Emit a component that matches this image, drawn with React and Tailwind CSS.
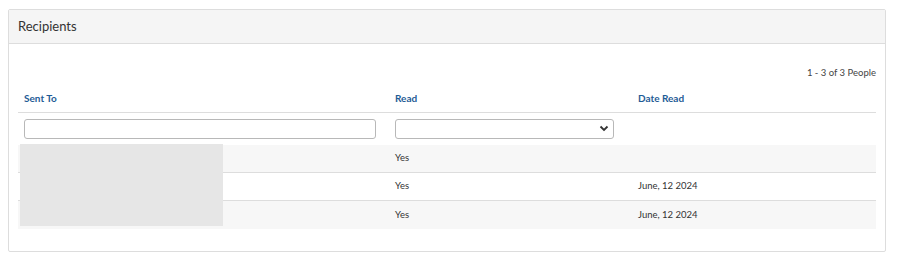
const rows = [
  { read: "Yes", date: "" },
  { read: "Yes", date: "June, 12 2024" },
  { read: "Yes", date: "June, 12 2024" },
];

export default function App() {
  return (
    <div className="bg-white w-[902px] h-[262px] pt-[9px] pl-[8px] font-['Lato','Open_Sans',sans-serif] text-[#333]">
      <div className="w-[878px] h-[243px] border border-[#dddddd] rounded-[2px]">
        <div className="h-[34px] bg-[#f5f5f5] border-b border-[#dddddd] px-[9px] flex items-center text-[13px] text-[#333]">
          Recipients
        </div>
        <div className="pl-[9px] pr-[8px]">
          <div className="h-[36px] pt-[22px] pr-[1px] text-right text-[9.5px] leading-[14px] text-[#444]">
            1 - 3 of 3 People
          </div>
          <div className="relative">
            <table className="w-[858px] table-fixed border-collapse text-[9.5px]">
              <colgroup>
                <col className="w-[371px]" />
                <col className="w-[243px]" />
                <col className="w-[244px]" />
              </colgroup>
              <thead>
                <tr className="border-b border-[#dddddd]">
                  <th className="h-[32px] px-[6px] pt-[6px] text-left align-middle text-[10px] font-bold text-[#1f5c96]">Sent To</th>
                  <th className="h-[32px] px-[6px] pt-[6px] text-left align-middle text-[10px] font-bold text-[#1f5c96]">Read</th>
                  <th className="h-[32px] px-[6px] pt-[6px] text-left align-middle text-[10px] font-bold text-[#1f5c96]">Date Read</th>
                </tr>
              </thead>
              <tbody>
                <tr>
                  <td className="h-[32px] px-[6px] pt-[6px] pb-[6px] align-top">
                    <input className="block w-[352px] h-[20px] border border-[#b8b8b8] rounded-[3px] bg-white" />
                  </td>
                  <td className="h-[32px] px-[6px] pt-[6px] pb-[6px] align-top">
                    <div className="w-[219px] h-[20px] border border-[#b8b8b8] rounded-[3px] bg-white flex items-center justify-end pr-[4px]">
                      <svg width="10" height="7" viewBox="0 0 10 7" fill="none">
                        <path d="M1.5 1.5 L5 5 L8.5 1.5" stroke="#333" strokeWidth="1.8" />
                      </svg>
                    </div>
                  </td>
                  <td />
                </tr>
                {rows.map((r, i) => (
                  <tr key={i} className={`${i % 2 === 0 ? "bg-[#f7f7f7]" : "bg-white"} ${i < rows.length - 1 ? "border-b border-[#dddddd]" : ""}`}>
                    <td className="h-[28px] px-[6px]" />
                    <td className="h-[28px] px-[6px]">{r.read}</td>
                    <td className="h-[28px] px-[6px]">{r.date}</td>
                  </tr>
                ))}
              </tbody>
            </table>
            <div className="absolute left-[2px] top-[64px] w-[203px] h-[82px] bg-[#e6e6e6]" />
          </div>
        </div>
      </div>
    </div>
  );
}
